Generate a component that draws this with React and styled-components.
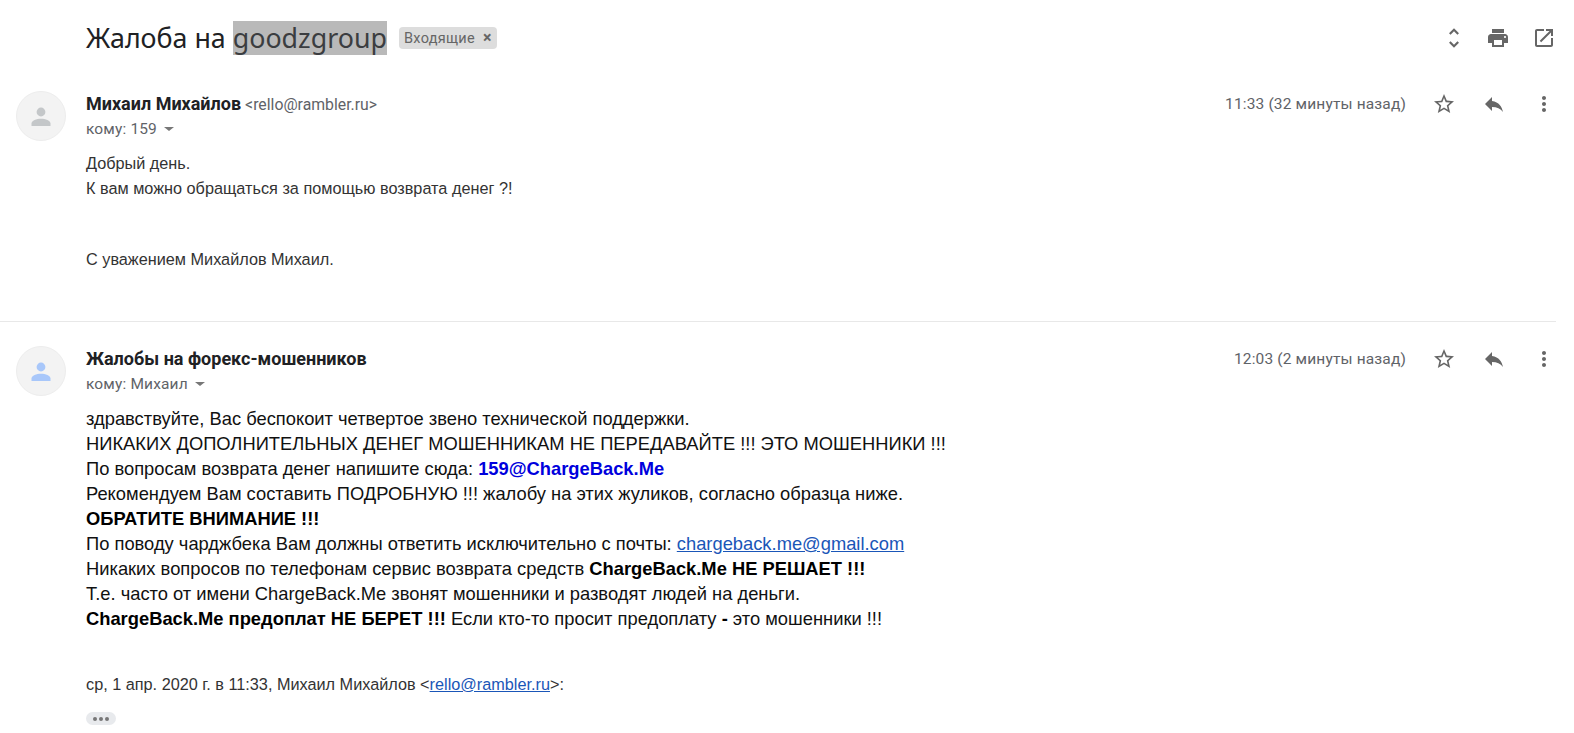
import React from "react";
import styled, { createGlobalStyle } from "styled-components";

const Global = createGlobalStyle`
  html, body { margin: 0; padding: 0; background: #fff; }
  body { font-family: "Liberation Sans", Arial, sans-serif; overflow: hidden; }
`;

const Page = styled.div`
  width: 1574px;
  height: 733px;
  overflow: hidden;
`;

const Subject = styled.div`
  display: flex;
  align-items: center;
  height: 76px;
  padding: 0 18px 0 86px;
`;

const Title = styled.h1`
  margin: 0;
  font: 400 26.8px/34px "Noto Sans", sans-serif;
  color: #202124;
`;

const Selected = styled.span`
  display: inline-block;
  background: #b9b9b9;
  color: #3b3d40;
`;

const Chip = styled.span`
  display: inline-flex;
  align-items: center;
  gap: 8px;
  height: 22px;
  margin-left: 12px;
  padding: 0 5px;
  border-radius: 4px;
  background: #dddddd;
  color: #666;
  font: 400 14.5px "Roboto", sans-serif;
  letter-spacing: 0.3px;
`;

const ChipClose = styled.span`
  font-size: 16px;
  font-weight: 700;
  line-height: 1;
`;

const Tools = styled.div`
  display: flex;
  align-items: center;
  gap: 22px;
  margin-left: auto;
`;

const UpDown = styled.span`
  display: flex;
  margin-right: -3px;
`;

const Message = styled.section`
  display: flex;
  width: 1556px;
  box-sizing: border-box;
  padding: ${(p) => p.$top}px 0 0 16px;
  height: ${(p) => p.$height}px;
  border-bottom: ${(p) => (p.$line ? "1px solid #e8e8e8" : "none")};
`;

const Avatar = styled.div`
  flex: none;
  display: flex;
  align-items: center;
  justify-content: center;
  width: 50px;
  height: 50px;
  border-radius: 50%;
  background: #f3f3f3;
  border: 1px solid #ededed;
  box-sizing: border-box;
  margin-right: 20px;
`;

const Content = styled.div`
  flex: 1;
  min-width: 0;
  padding-top: 1px;
`;

const Head = styled.div`
  display: flex;
  justify-content: space-between;
  height: 25px;
`;

const From = styled.div`
  display: flex;
  align-items: baseline;
  gap: 4px;
  line-height: 24px;
`;

const Name = styled.span`
  font: 700 18px/24px "Roboto", sans-serif;
  color: #202124;
`;

const Address = styled.span`
  font: 400 15.8px/24px "Roboto", sans-serif;
  color: #5f6368;
`;

const Actions = styled.div`
  display: flex;
  align-items: center;
  height: 24px;
`;

const Time = styled.span`
  font: 400 15.5px/24px "Roboto", sans-serif;
  letter-spacing: 0.15px;
  color: #5f6368;
  margin-right: 26px;
`;

const ActionIcons = styled.div`
  display: flex;
  align-items: center;
  gap: 26px;
`;

const To = styled.div`
  display: flex;
  align-items: center;
  gap: 7px;
  height: 24px;
  font: 400 15.5px/24px "Roboto", sans-serif;
  letter-spacing: 0.15px;
  color: #5f6368;
`;

const Caret = styled.span`
  width: 0;
  height: 0;
  border-left: 5px solid transparent;
  border-right: 5px solid transparent;
  border-top: 4px solid #777;
`;

const ShortBody = styled.div`
  margin-top: 10px;
  font-size: 16.25px;
  line-height: 25px;
  color: #333;
`;

const Gap = styled.div`
  height: ${(p) => p.$h}px;
`;

const LongBody = styled.div`
  margin-top: 10px;
  font-size: 18.33px;
  line-height: 25px;
  color: #111;
`;

const Line = styled.div`
  white-space: nowrap;
`;

const Strong = styled.b`
  font-weight: 700;
  color: #000;
`;

const BlueStrong = styled.b`
  font-weight: 700;
  color: #0000dd;
`;

const Link = styled.a`
  color: #1a56b8;
  text-decoration: underline;
`;

const Quote = styled.div`
  margin-top: 41px;
  font-size: 16.25px;
  line-height: 24px;
  color: #333;
`;

const Dots = styled.div`
  display: flex;
  align-items: center;
  justify-content: center;
  gap: 2px;
  width: 30px;
  height: 13px;
  margin-top: 16px;
  border-radius: 7px;
  background: #e8eaed;
`;

const Dot = styled.i`
  width: 4px;
  height: 4px;
  border-radius: 50%;
  background: #777;
`;

const Icon = ({ size = 24, fill = "#666", d }) => (
  <svg width={size} height={size} viewBox="0 0 24 24" fill={fill}>
    <path d={d} />
  </svg>
);

const paths = {
  updown: "M12 5.83 15.17 9l1.41-1.41L12 3 7.41 7.59 8.83 9 12 5.83zm0 12.34L8.83 15l-1.41 1.41L12 21l4.59-4.59L15.17 15 12 18.17z",
  print: "M19 8H5c-1.66 0-3 1.34-3 3v6h4v4h12v-4h4v-6c0-1.66-1.34-3-3-3zm-3 11H8v-5h8v5zm3-7c-.55 0-1-.45-1-1s.45-1 1-1 1 .45 1 1-.45 1-1 1zm-1-9H6v4h12V3z",
  open: "M19 19H5V5h7V3H5c-1.11 0-2 .9-2 2v14c0 1.1.89 2 2 2h14c1.1 0 2-.9 2-2v-7h-2v7zM14 3v2h3.59l-9.83 9.83 1.41 1.41L19 6.41V10h2V3h-7z",
  star: "M22 9.24l-7.19-.62L12 2 9.19 8.63 2 9.24l5.46 4.73L5.82 21 12 17.27 18.18 21l-1.63-7.03L22 9.24zM12 15.4l-3.76 2.27 1-4.28-3.32-2.88 4.38-.38L12 6.1l1.71 4.04 4.38.38-3.32 2.88 1 4.28L12 15.4z",
  reply: "M10 9V5l-7 7 7 7v-4.1c5 0 8.5 1.6 11 5.1-1-5-4-10-11-11z",
  more: "M12 8c1.1 0 2-.9 2-2s-.9-2-2-2-2 .9-2 2 .9 2 2 2zm0 2c-1.1 0-2 .9-2 2s.9 2 2 2 2-.9 2-2-.9-2-2-2zm0 6c-1.1 0-2 .9-2 2s.9 2 2 2 2-.9 2-2-.9-2-2-2z",
};

const Person = ({ color }) => (
  <svg width="24" height="24" viewBox="0 0 24 24" fill={color}>
    <circle cx="12" cy="8" r="4.4" />
    <path d="M2.5 22v-2.500c0-3 5-4.800 9.500-4.800s9.500 1.800 9.500 4.800V22z" />
  </svg>
);

const HeadActions = ({ time }) => (
  <Actions>
    <Time>{time}</Time>
    <ActionIcons>
      <Icon d={paths.star} />
      <Icon d={paths.reply} />
      <Icon d={paths.more} />
    </ActionIcons>
  </Actions>
);

export default function App() {
  return (
    <Page>
      <Global />
      <Subject>
        <Title>
          Жалоба на <Selected>goodzgroup</Selected>
        </Title>
        <Chip>
          Входящие <ChipClose>×</ChipClose>
        </Chip>
        <Tools>
          <UpDown>
            <Icon size={26} d={paths.updown} />
          </UpDown>
          <Icon d={paths.print} />
          <Icon d={paths.open} />
        </Tools>
      </Subject>

      <Message $top={15} $height={246} $line>
        <Avatar>
          <Person color="#c4c7c9" />
        </Avatar>
        <Content>
          <Head>
            <From>
              <Name>Михаил Михайлов</Name>
              <Address>&lt;rello@rambler.ru&gt;</Address>
            </From>
            <HeadActions time="11:33 (32 минуты назад)" />
          </Head>
          <To>
            кому: 159 <Caret />
          </To>
          <ShortBody>
            <Line>Добрый день.</Line>
            <Line>К вам можно обращаться за помощью возврата денег ?!</Line>
            <Gap $h={46} />
            <Line>С уважением Михайлов Михаил.</Line>
          </ShortBody>
        </Content>
      </Message>

      <Message $top={24} $height={411}>
        <Avatar>
          <Person color="#a8c7fa" />
        </Avatar>
        <Content>
          <Head>
            <From>
              <Name>Жалобы на форекс-мошенников</Name>
            </From>
            <HeadActions time="12:03 (2 минуты назад)" />
          </Head>
          <To>
            кому: Михаил <Caret />
          </To>
          <LongBody>
            <Line>здравствуйте, Вас беспокоит четвертое звено технической поддержки.</Line>
            <Line>НИКАКИХ ДОПОЛНИТЕЛЬНЫХ ДЕНЕГ МОШЕННИКАМ НЕ ПЕРЕДАВАЙТЕ !!! ЭТО МОШЕННИКИ !!!</Line>
            <Line>
              По вопросам возврата денег напишите сюда: <BlueStrong>159@ChargeBack.Me</BlueStrong>
            </Line>
            <Line>Рекомендуем Вам составить ПОДРОБНУЮ !!! жалобу на этих жуликов, согласно образца ниже.</Line>
            <Line>
              <Strong>ОБРАТИТЕ ВНИМАНИЕ !!!</Strong>
            </Line>
            <Line>
              По поводу чарджбека Вам должны ответить исключительно с почты: <Link href="#">chargeback.me@gmail.com</Link>
            </Line>
            <Line>
              Никаких вопросов по телефонам сервис возврата средств <Strong>ChargeBack.Me НЕ РЕШАЕТ !!!</Strong>
            </Line>
            <Line>Т.е. часто от имени ChargeBack.Me звонят мошенники и разводят людей на деньги.</Line>
            <Line>
              <Strong>ChargeBack.Me предоплат НЕ БЕРЕТ !!!</Strong> Если кто-то просит предоплату <Strong>-</Strong> это мошенники !!!
            </Line>
          </LongBody>
          <Quote>
            ср, 1 апр. 2020 г. в 11:33, Михаил Михайлов &lt;<Link href="#">rello@rambler.ru</Link>&gt;:
          </Quote>
          <Dots>
            <Dot />
            <Dot />
            <Dot />
          </Dots>
        </Content>
      </Message>
    </Page>
  );
}
